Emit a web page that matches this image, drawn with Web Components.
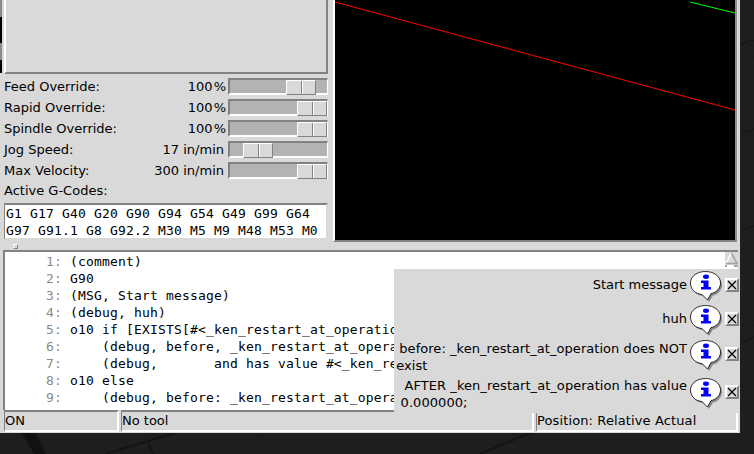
<!DOCTYPE html>
<html>
<head>
<meta charset="utf-8">
<style>
html, body { margin: 0; height: 100%; background: #1e1e1e; overflow: hidden; }
</style>
</head>
<body>
<desk-top></desk-top>
<axis-window>
	<div slot="side">
		<override-row label="Feed Override:" value="100" unit="%" pos="56"></override-row>
		<override-row label="Rapid Override:" value="100" unit="%" pos="67"></override-row>
		<override-row label="Spindle Override:" value="100" unit="%" pos="67"></override-row>
		<override-row label="Jog Speed:" value="17" unit="in/min" pos="13"></override-row>
		<override-row label="Max Velocity:" value="300" unit="in/min" pos="67"></override-row>
	</div>
	<gcode-box slot="gcodes">
		<div>G1 G17 G40 G20 G90 G94 G54 G49 G99 G64</div>
		<div>G97 G91.1 G8 G92.2 M30 M5 M9 M48 M53 M0</div>
	</gcode-box>
	<preview-view slot="preview"></preview-view>
	<code-view slot="code"></code-view>
	<status-pane slot="status" style="width:115px">ON</status-pane>
	<status-pane slot="status" style="width:413px">No tool</status-pane>
	<status-pane slot="status" style="flex:1;margin-right:0;letter-spacing:.12px">Position: Relative Actual</status-pane>
	<notify-panel slot="notes">
		<notify-item>Start message</notify-item>
		<notify-item>huh</notify-item>
		<notify-item tall>before: _ken_restart_at_operation does NOT<br><span style="margin-left:-3px">exist</span></notify-item>
		<notify-item tall><span style="margin-left:4px">AFTER _ken_restart_at_operation has value</span><br>0.000000;</notify-item>
	</notify-panel>
</axis-window>

<script>
const UI_FONT = `"DejaVu Sans", sans-serif`;
const MONO_FONT = `"DejaVu Sans Mono", monospace`;

class DeskTop extends HTMLElement {
	constructor() {
		super();
		this.attachShadow({ mode: "open" }).innerHTML = `
<style>
:host { display: block; position: absolute; left: 0; top: 0; }
svg { display: block; }
</style>
<svg width="754" height="454" fill="none" stroke="#141414">
	<path d="M22 433 L34 454 H46 L36 433 Z" fill="#111" stroke="none" />
	<path d="M105 454 L175 433" stroke-width="2" />
	<path d="M147 440 L153 454" stroke-width="2" />
	<path d="M480 454 L530 433" stroke-width="2" />
	<path d="M260 433 L267 454" stroke="#191919" />
	<path d="M740 44 L754 40" />
	<path d="M740 134 L754 129" />
	<path d="M740 230 L754 226" />
	<path d="M740 343 L754 337" />
	<path d="M740 42 L754 58" stroke="#191919" />
	<path d="M740 310 L754 326" stroke="#191919" />
</svg>`;
	}
}
customElements.define("desk-top", DeskTop);

class AxisWindow extends HTMLElement {
	constructor() {
		super();
		this.attachShadow({ mode: "open" }).innerHTML = `
<style>
:host {
	display: block;
	position: relative;
	width: 740px;
	height: 433px;
	background: #d9d9d9;
	font: 13px ${UI_FONT};
	color: #000;
}
.top {
	display: grid;
	grid-template-columns: 329px 1fr;
	height: 250px;
}
.side {
	padding-left: 4px;
	display: flex;
	flex-direction: column;
	background: linear-gradient(#8a8a8a 17px, #000 17px, #000 43px, #8a8a8a 43px, #8a8a8a 60px, #000 60px) no-repeat 0 0 / 2px 73px;
}
.blank {
	height: 74px;
	flex: none;
	margin-right: 1px;
	box-sizing: border-box;
	background: #d9d9d9;
	border: 2px solid #828282;
	border-top: 0;
	border-left-color: #fff;
	margin-bottom: 2px;
}
.title { height: 22px; line-height: 20px; flex: none; }
.sash { height: 9px; position: relative; flex: none; }
.sash i {
	position: absolute;
	left: 9px;
	top: 4px;
	width: 3px;
	height: 3px;
	background: #d9d9d9;
	border: 1px solid #828282;
	border-left-color: #fff;
	border-top-color: #fff;
}
.status { display: flex; padding-left: 4px; padding-right: 2px; height: 23px; }
.notes { position: absolute; left: 394px; top: 269px; }
</style>
<div class="top">
	<div class="side">
		<div class="blank"></div>
		<slot name="side"></slot>
		<div class="title">Active G-Codes:</div>
		<slot name="gcodes"></slot>
		<div class="sash"><i></i></div>
	</div>
	<slot name="preview"></slot>
</div>
<slot name="code"></slot>
<div class="status"><slot name="status"></slot></div>
<div class="notes"><slot name="notes"></slot></div>`;
	}
}
customElements.define("axis-window", AxisWindow);

class OverrideRow extends HTMLElement {
	constructor() {
		super();
		const unit = this.getAttribute("unit");
		const pos = this.getAttribute("pos");
		this.attachShadow({ mode: "open" }).innerHTML = `
<style>
:host { display: flex; align-items: center; height: 21px; margin-right: 1px; }
.label { flex: 1; white-space: nowrap; }
.value { white-space: pre; padding-right: ${unit == "%" ? 2 : 4}px; word-spacing: ${unit == "%" ? -3 : 0}px; }
.trough {
	width: 100px;
	height: 17px;
	box-sizing: border-box;
	background: #b3b3b3;
	border: 2px solid #828282;
	border-right: 1px solid #fff;
	border-bottom: 2px solid #fff;
	display: flex;
}
.thumb {
	margin-left: ${pos}px;
	width: 28px;
	height: 13px;
	display: flex;
	background: #d9d9d9;
	border: 1px solid #fff;
	border-right: 1px solid #828282;
	border-bottom: 1px solid #828282;
	flex: none;
}
.thumb i { flex: 1; }
.thumb i:first-child { border-right: 1px solid #828282; box-shadow: 1px 0 0 #fff; }
</style>
<span class="label">${this.getAttribute("label")}</span>
<span class="value">${this.getAttribute("value")} ${unit}</span>
<div class="trough"><div class="thumb"><i></i><i></i></div></div>`;
	}
}
customElements.define("override-row", OverrideRow);

class GcodeBox extends HTMLElement {
	constructor() {
		super();
		this.attachShadow({ mode: "open" }).innerHTML = `
<style>
:host {
	display: block;
	flex: none;
	margin-right: 1px;
	height: 37px;
	box-sizing: border-box;
	background: #fff;
	border: 2px solid #828282;
	border-left-width: 1px;
	border-right-color: #d9d9d9;
	border-bottom-color: #d9d9d9;
	padding-left: 1px;
	font: 13px/17px ${MONO_FONT};
	letter-spacing: 0.17px;
	white-space: nowrap;
}
</style>
<slot></slot>`;
	}
}
customElements.define("gcode-box", GcodeBox);

class PreviewView extends HTMLElement {
	constructor() {
		super();
		this.attachShadow({ mode: "open" }).innerHTML = `
<style>
:host {
	display: block;
	margin: 0 3px 0 4px;
	height: 240px;
	background: #000;
	border-left: 2px solid #fff;
	border-right: 2px solid #8f8f8f;
	border-bottom: 2px solid #828282;
}
svg { display: block; }
</style>
<svg width="400" height="238" viewBox="335 0 400 238">
	<line x1="335" y1="2" x2="735" y2="110" stroke="#f00" />
	<line x1="690" y1="2" x2="735" y2="13" stroke="#0f0" />
</svg>`;
	}
}
customElements.define("preview-view", PreviewView);

// the message panel covers the ends of the long lines, so they stop where it starts
const CODE = [
	"(comment)",
	"G90",
	"(MSG, Start message)",
	"(debug, huh)",
	"o10 if [EXISTS[#<_ken_restart_at_operatio",
	"    (debug, before, _ken_restart_at_opera",
	"    (debug,       and has value #<_ken_re",
	"o10 else",
	"    (debug, before: _ken_restart_at_opera",
];

class CodeView extends HTMLElement {
	constructor() {
		super();
		const lines = CODE.map((text, i) => `<div><span class="num">     ${i + 1}: </span>${text.replace(/</g, "&lt;")}</div>`).join("");
		this.attachShadow({ mode: "open" }).innerHTML = `
<style>
:host {
	display: flex;
	height: 160px;
	box-sizing: border-box;
	margin-left: 3px;
	margin-right: 2px;
	background: #fff;
	border-top: 2px solid #828282;
	border-left: 2px solid #828282;
}
.text {
	flex: 1;
	overflow: hidden;
	padding: 1px 0 0 1px;
	font: 13px/17px ${MONO_FONT};
	letter-spacing: 0.17px;
	white-space: pre;
}
.num { color: #8a8a8a; }
.bar { width: 13px; background: #fff; }
svg { display: block; }
</style>
<div class="text">${lines}</div>
<div class="bar">
	<svg width="13" height="17" viewBox="0 0 13 17">
		<rect width="13" height="13" fill="#d9d9d9" />
		<path d="M6.500 1 L1 11.500" stroke="#fff" stroke-width="1.500" />
		<path d="M6.500 1 L12 11.500 H1" fill="none" stroke="#a0a0a0" stroke-width="1.500" />
		<path d="M9 14 H13 M0 14 H2" stroke="#a8a8a8" stroke-width="2" />
	</svg>
</div>`;
	}
}
customElements.define("code-view", CodeView);

class StatusPane extends HTMLElement {
	constructor() {
		super();
		this.attachShadow({ mode: "open" }).innerHTML = `
<style>
:host {
	display: block;
	box-sizing: border-box;
	height: 22px;
	margin-right: 2px;
	border: 2px solid #828282;
	border-right-color: #fff;
	border-bottom-color: #fff;
	border-left-width: 1px;
	line-height: 18px;
	white-space: nowrap;
}
</style>
<slot></slot>`;
	}
}
customElements.define("status-pane", StatusPane);

class NotifyPanel extends HTMLElement {
	constructor() {
		super();
		this.attachShadow({ mode: "open" }).innerHTML = `
<style>
:host {
	display: flex;
	flex-direction: column;
	width: 346px;
	height: 144px;
	box-sizing: border-box;
	padding-top: 2px;
	background: #d9d9d9;
}
</style>
<slot></slot>`;
	}
}
customElements.define("notify-panel", NotifyPanel);

class NotifyItem extends HTMLElement {
	constructor() {
		super();
		this.attachShadow({ mode: "open" }).innerHTML = `
<style>
:host { display: flex; height: 34px; padding-right: 1px; }
:host([tall]) { height: 38px; }
.msg {
	flex: 1;
	white-space: nowrap;
	line-height: 17px;
	display: flex;
	align-items: center;
	justify-content: flex-end;
	margin-right: 2px;
}
:host([tall]) .msg { letter-spacing: 0.05px; }
:host(:not([tall])) .msg { padding-bottom: 6px; }
.icon { display: block; flex: none; margin-right: 2px; }
:host([tall]) .icon { margin-top: 2px; }
.close {
	flex: none;
	width: 14px;
	height: 14px;
	margin-top: 7px;
	box-sizing: border-box;
	border: 2px solid #fff;
	border-right-color: #828282;
	border-bottom-color: #828282;
	background: #d9d9d9;
	display: flex;
	align-items: center;
	justify-content: center;
}
:host([tall]) .close { margin-top: 9px; }
svg { overflow: visible; }
</style>
<div class="msg"><div><slot></slot></div></div>
<svg class="icon" width="34" height="31" viewBox="0 0 34 31">
	<path d="M18 2.500 C26 2.500 33 7 33 14 C33 20 28 24 24 24.500 L20 31 L16 25.500 C8 25 3 20 3 14 C3 7 10 2.500 18 2.500 Z" fill="#8a8a8a" />
	<path d="M16.500 .500 C24.500 .500 31.500 5 31.500 12 C31.500 18 26.500 22 22 22.500 L18.500 29 L13 23.500 C6 23 1.500 18 1.500 12 C1.500 5 8.500 .500 16.500 .500 Z" fill="#fff" stroke="#000" stroke-width=".8" />
	<ellipse cx="17" cy="5.800" rx="3" ry="2.200" fill="#00f" />
	<path d="M12 9.500 H19.500 V16 H22 V18.500 H12 V16 H14.500 V12 H12 Z" fill="#00f" />
</svg>
<div class="close">
	<svg width="8" height="8" viewBox="0 0 8 8"><path d="M0 0 L8 8 M8 0 L0 8" stroke="#000" stroke-width="1.300" /></svg>
</div>`;
	}
}
customElements.define("notify-item", NotifyItem);
</script>
</body>
</html>
